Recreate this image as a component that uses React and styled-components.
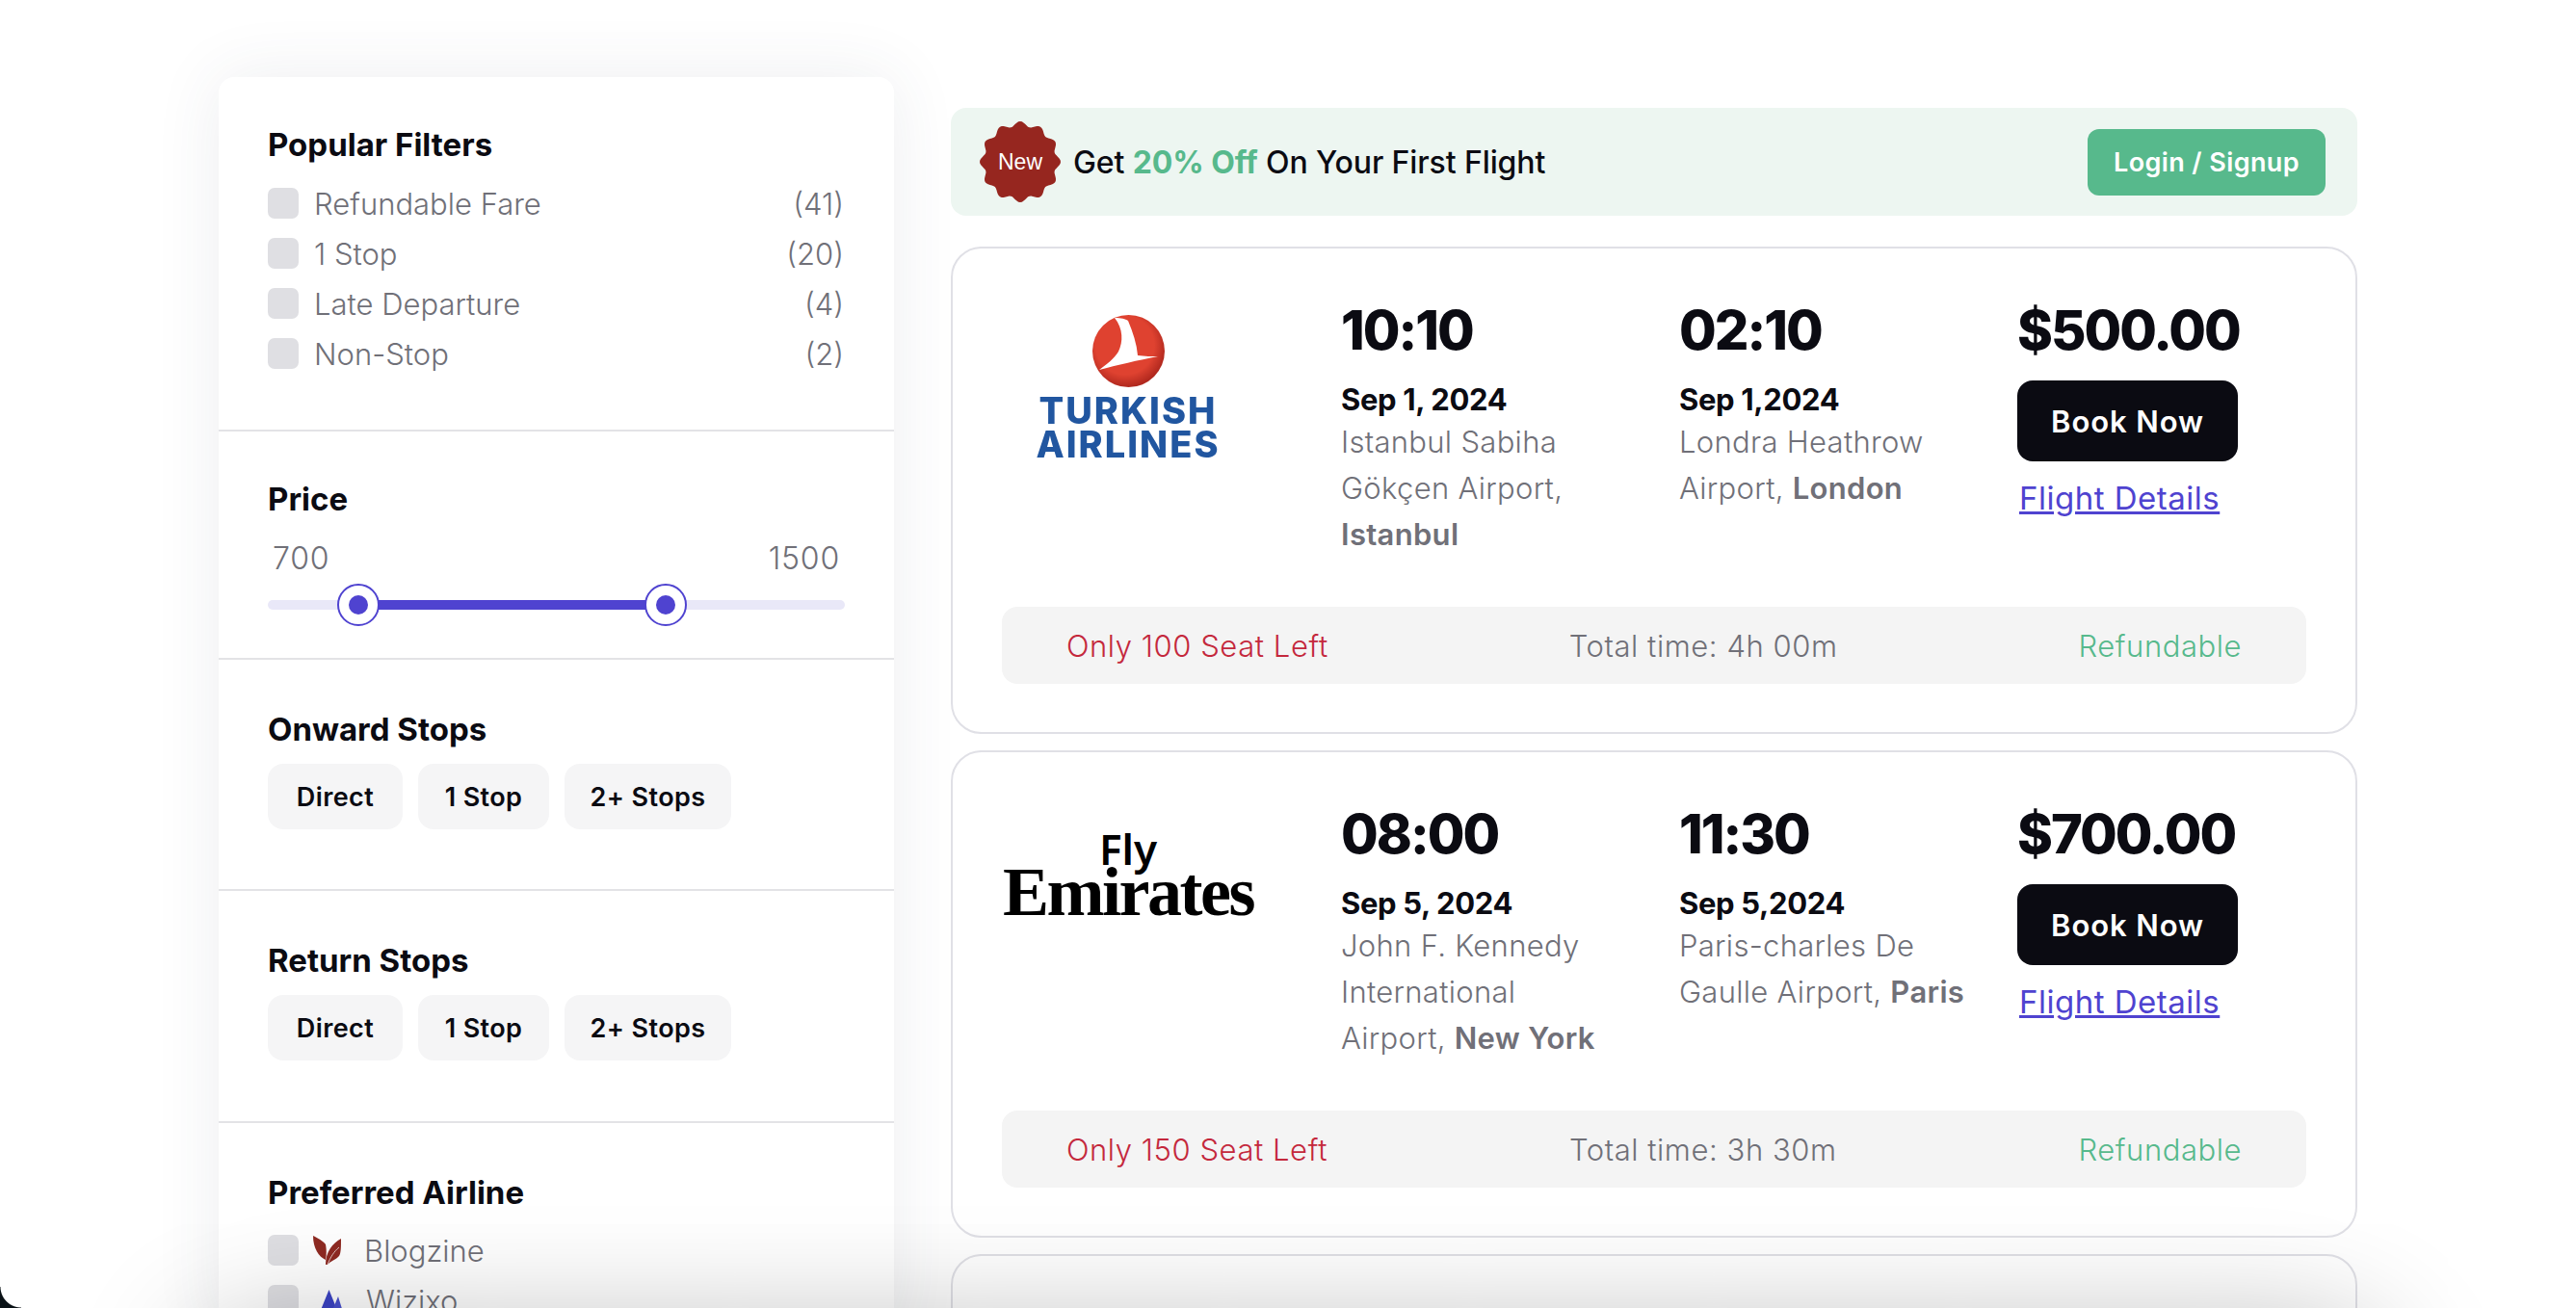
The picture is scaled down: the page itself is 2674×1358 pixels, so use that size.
import styled, { createGlobalStyle } from "styled-components";

const ink = "#0b0b12";
const gray = "#707078";
const green = "#57b98c";
const indigo = "#4f43d0";
const sans = `"Inter", "Liberation Sans", sans-serif`;

const GlobalStyle = createGlobalStyle`
  html, body {
    margin: 0;
    background: #fff;
    font-family: ${sans};
    color: ${ink};
  }
`;

const Page = styled.div`
  position: relative;
  display: flex;
  align-items: flex-start;
  gap: 59px;
  height: 1358px;
  padding: 80px 0 0 227px;
  box-sizing: border-box;
  overflow: hidden;
  background: #fff;
`;

const FooterShadow = styled.div`
  position: absolute;
  left: 230px;
  right: 230px;
  top: 1412px;
  height: 200px;
  border-radius: 40px;
  box-shadow: 0 0 130px 30px rgba(0, 0, 0, 0.3);
  pointer-events: none;
`;

const WindowCorner = styled.div`
  position: absolute;
  left: 0;
  bottom: 0;
  width: 22px;
  height: 22px;
  background: radial-gradient(circle at 100% 0, transparent 21px, #0a1216 22px);
  pointer-events: none;
`;

const Sidebar = styled.aside`
  flex: none;
  width: 701px;
  border-radius: 16px;
  background: #fff;
  box-shadow: 0 0 70px rgba(60, 70, 90, 0.09);
`;

const Section = styled.section`
  padding: ${(p) => p.$top}px 51px ${(p) => p.$bottom}px;
  border-bottom: ${(p) => (p.$last ? "none" : "2px solid #e3e3e6")};
`;

const Heading = styled.h3`
  margin: 0 0 ${(p) => p.$gap}px;
  font-size: 33px;
  line-height: 40px;
  font-weight: 700;
  letter-spacing: 0;
  color: ${ink};
`;

const CheckRow = styled.div`
  display: flex;
  align-items: center;
  height: 32px;
  margin-bottom: 20px;
  font-size: 31px;
  font-weight: 300;
  letter-spacing: 0;
  color: ${gray};
`;

const Check = styled.span`
  flex: none;
  width: 32px;
  height: 32px;
  margin-right: ${(p) => p.$gap || 16}px;
  border-radius: 7px;
  background: #dfdfe3;
`;

const Count = styled.span`
  margin-left: auto;
  padding-right: 1px;
`;

const AirlineIcon = styled.svg`
  flex: none;
  width: 30px;
  height: 30px;
  margin-right: ${(p) => p.$gap}px;
`;

const PriceLabels = styled.div`
  display: flex;
  justify-content: space-between;
  padding: 0 5px;
  font-size: 32px;
  line-height: 40px;
  font-weight: 300;
  letter-spacing: 0.8px;
  color: ${gray};
`;

const Slider = styled.div`
  position: relative;
  height: 44px;
  margin-top: 6px;
  &::before {
    content: "";
    position: absolute;
    left: 0;
    right: 0;
    top: 17px;
    height: 10px;
    border-radius: 5px;
    background: #e9e8f8;
  }
`;

const SliderFill = styled.div`
  position: absolute;
  left: 94px;
  width: 319px;
  top: 17px;
  height: 10px;
  background: ${indigo};
`;

const Thumb = styled.span`
  position: absolute;
  left: ${(p) => p.$at}px;
  top: 0;
  width: 44px;
  height: 44px;
  box-sizing: border-box;
  border: 2px solid ${indigo};
  border-radius: 50%;
  background: #fff;
  display: flex;
  align-items: center;
  justify-content: center;
  &::after {
    content: "";
    width: 20px;
    height: 20px;
    border-radius: 50%;
    background: ${indigo};
  }
`;

const Chips = styled.div`
  display: flex;
  gap: 16px;
`;

const Chip = styled.button`
  width: ${(p) => p.$width}px;
  height: 68px;
  padding: 0;
  border: none;
  border-radius: 16px;
  background: #f5f5f6;
  font-family: ${sans};
  font-size: 27px;
  font-weight: 600;
  letter-spacing: 0.4px;
  color: ${ink};
`;

const Main = styled.main`
  flex: none;
  width: 1460px;
  padding-top: 32px;
  display: flex;
  flex-direction: column;
`;

const Banner = styled.div`
  display: flex;
  align-items: center;
  height: 112px;
  margin-bottom: 32px;
  padding: 0 33px 0 30px;
  box-sizing: border-box;
  border-radius: 16px;
  background: #edf6f1;
`;

// 12 lobes round the badge
const badgeShape = Array.from({ length: 144 }, (_, i) => {
  const a = (i / 144) * Math.PI * 2;
  const r = 47 + 3 * Math.cos(12 * a);
  return `${(50 + r * Math.sin(a)).toFixed(1)}% ${(50 - r * Math.cos(a)).toFixed(1)}%`;
}).join(",");

const Badge = styled.div`
  flex: none;
  width: 84px;
  height: 84px;
  margin-right: 13px;
  display: flex;
  align-items: center;
  justify-content: center;
  background: #96261f;
  clip-path: polygon(${badgeShape});
  color: #fff;
  font-family: "Liberation Sans", sans-serif;
  font-size: 23px;
`;

const BannerText = styled.div`
  font-size: 32px;
  font-weight: 500;
  letter-spacing: -0.1px;
  color: ${ink};
`;

const Green = styled.strong`
  font-weight: 700;
  color: ${green};
`;

const LoginButton = styled.button`
  margin-left: auto;
  width: 247px;
  height: 69px;
  border: none;
  border-radius: 12px;
  background: ${green};
  color: #fff;
  font-family: ${sans};
  font-size: 27px;
  font-weight: 600;
  letter-spacing: 0.4px;
`;

const Card = styled.article`
  height: 506px;
  margin-bottom: 17px;
  padding: 53px 51px 0;
  box-sizing: border-box;
  border: 2px solid #e0e0e6;
  border-radius: 32px;
  background: #fff;
`;

const CardTop = styled.div`
  display: grid;
  grid-template-columns: 352px 351px 351px 1fr;
  height: 319px;
`;

const LogoBox = styled.div`
  width: 262px;
  display: flex;
  flex-direction: column;
  align-items: center;
  padding-top: ${(p) => p.$top}px;
`;

const TurkishMark = styled.svg`
  width: 75px;
  height: 75px;
  filter: blur(0.4px);
`;

const TurkishName = styled.div`
  margin-top: 7px;
  font-size: 38px;
  line-height: 35px;
  font-weight: 800;
  text-align: center;
  letter-spacing: 2px;
  color: #2156a0;
  filter: blur(0.4px);
`;

const FlyText = styled.div`
  font-family: "Noto Sans", sans-serif;
  font-size: 44px;
  line-height: 40px;
  font-weight: 600;
  color: #000;
`;

const EmiratesText = styled.div`
  font-family: "Liberation Serif", serif;
  font-size: 72px;
  line-height: 50px;
  font-weight: 700;
  letter-spacing: -2.5px;
  color: #000;
`;

const BigFigure = styled.div`
  font-size: 56px;
  line-height: 64px;
  font-weight: 800;
  letter-spacing: -2px;
  color: ${ink};
`;

const DateLine = styled.div`
  margin-top: 20px;
  font-size: 31px;
  line-height: 40px;
  font-weight: 700;
  letter-spacing: -0.35px;
  color: ${ink};
`;

const Place = styled.div`
  font-size: 31px;
  line-height: 48px;
  font-weight: 300;
  letter-spacing: 0.3px;
  color: ${gray};
  strong {
    font-weight: 600;
  }
`;

const PriceCol = styled.div`
  display: flex;
  flex-direction: column;
  align-items: flex-start;
`;

const BookButton = styled.button`
  width: 229px;
  height: 84px;
  margin-top: 20px;
  border: none;
  border-radius: 16px;
  background: ${ink};
  color: #fff;
  font-family: ${sans};
  font-size: 31px;
  font-weight: 600;
  letter-spacing: 0.9px;
`;

const DetailsLink = styled.a`
  margin: 18px 0 0 2px;
  font-size: 33px;
  line-height: 40px;
  letter-spacing: 0.5px;
  color: ${indigo};
  text-decoration: underline;
`;

const Strip = styled.div`
  display: flex;
  align-items: center;
  justify-content: space-between;
  height: 80px;
  padding: 0 67px;
  border-radius: 16px;
  background: #f4f4f4;
  font-size: 31px;
  font-weight: 300;
  letter-spacing: 0.55px;
  color: ${gray};
`;

const Seats = styled.span`
  color: #c4283c;
`;

const Refund = styled.span`
  color: ${green};
`;

const popular = [
  ["Refundable Fare", "(41)"],
  ["1 Stop", "(20)"],
  ["Late Departure", "(4)"],
  ["Non-Stop", "(2)"],
];

const stops = [
  ["Direct", 140],
  ["1 Stop", 136],
  ["2+ Stops", 173],
];

const BlogzineIcon = () => (
  <AirlineIcon $gap={23} viewBox="0 0 30 30">
    <path d="M0 0C4 2 10 5 13 9C14 14 14 20 13 25C6 22 0 13 0 0Z" fill="#8f2a22" />
    <path d="M29 3C29 12 29 18 27 21C24 25 18 26 15 30H13C13 17 20 8 29 3Z" fill="#8f2a22" />
    <path d="M15 30C18 22 22 16 27 12" fill="none" stroke="#fff" strokeWidth="0.7" />
  </AirlineIcon>
);

const WizixoIcon = () => (
  <AirlineIcon $gap={20} viewBox="0 0 30 30">
    <path d="M11.5 4L1 30H22Z" fill="#3c44c5" />
    <path d="M21 11L13 30H27Z" fill="#4a52cf" />
  </AirlineIcon>
);

const TurkishLogo = () => (
  <LogoBox $top={16}>
    <TurkishMark viewBox="0 0 75 75">
      <defs>
        <radialGradient id="ball" cx="45%" cy="42%" r="58%">
          <stop offset="70%" stopColor="#df4230" />
          <stop offset="100%" stopColor="#b0281e" />
        </radialGradient>
      </defs>
      <circle cx="37.5" cy="37.5" r="37.5" fill="url(#ball)" />
      <path
        d="M23 3C30 3 34 4 37 6C42 18 46 30 47 42C54 43 62 43 68 43C48 47 25 52 7 57C15 51 23 45 27 38C32 28 32 14 23 3Z"
        fill="#fff"
      />
    </TurkishMark>
    <TurkishName>
      TURKISH
      <br />
      AIRLINES
    </TurkishName>
  </LogoBox>
);

const EmiratesLogo = () => (
  <LogoBox $top={27}>
    <FlyText>Fly</FlyText>
    <EmiratesText>Emirates</EmiratesText>
  </LogoBox>
);

const flights = [
  {
    logo: <TurkishLogo />,
    depart: "10:10",
    departDate: "Sep 1, 2024",
    from: (
      <>
        Istanbul Sabiha
        <br />
        Gökçen Airport,
        <br />
        <strong>Istanbul</strong>
      </>
    ),
    arrive: "02:10",
    arriveDate: "Sep 1,2024",
    to: (
      <>
        Londra Heathrow
        <br />
        Airport, <strong>London</strong>
      </>
    ),
    price: "$500.00",
    seats: "Only 100 Seat Left",
    total: "Total time: 4h 00m",
  },
  {
    logo: <EmiratesLogo />,
    depart: "08:00",
    departDate: "Sep 5, 2024",
    from: (
      <>
        John F. Kennedy
        <br />
        International
        <br />
        Airport, <strong>New York</strong>
      </>
    ),
    arrive: "11:30",
    arriveDate: "Sep 5,2024",
    to: (
      <>
        Paris-charles De
        <br />
        Gaulle Airport, <strong>Paris</strong>
      </>
    ),
    price: "$700.00",
    seats: "Only 150 Seat Left",
    total: "Total time: 3h 30m",
  },
];

const FlightCard = ({ flight }) => (
  <Card>
    <CardTop>
      {flight.logo}
      <div>
        <BigFigure>{flight.depart}</BigFigure>
        <DateLine>{flight.departDate}</DateLine>
        <Place>{flight.from}</Place>
      </div>
      <div>
        <BigFigure>{flight.arrive}</BigFigure>
        <DateLine>{flight.arriveDate}</DateLine>
        <Place>{flight.to}</Place>
      </div>
      <PriceCol>
        <BigFigure>{flight.price}</BigFigure>
        <BookButton>Book Now</BookButton>
        <DetailsLink href="#">Flight Details</DetailsLink>
      </PriceCol>
    </CardTop>
    <Strip>
      <Seats>{flight.seats}</Seats>
      <span>{flight.total}</span>
      <Refund>Refundable</Refund>
    </Strip>
  </Card>
);

const StopChips = () => (
  <Chips>
    {stops.map(([label, width]) => (
      <Chip key={label} $width={width}>
        {label}
      </Chip>
    ))}
  </Chips>
);

const App = () => (
  <Page>
    <GlobalStyle />
    <Sidebar>
      <Section $top={50} $bottom={43}>
        <Heading $gap={25}>Popular Filters</Heading>
        {popular.map(([label, count]) => (
          <CheckRow key={label}>
            <Check />
            {label}
            <Count>{count}</Count>
          </CheckRow>
        ))}
      </Section>
      <Section $top={50} $bottom={33}>
        <Heading $gap={22}>Price</Heading>
        <PriceLabels>
          <span>700</span>
          <span>1500</span>
        </PriceLabels>
        <Slider>
          <SliderFill />
          <Thumb $at={72} />
          <Thumb $at={391} />
        </Slider>
      </Section>
      <Section $top={52} $bottom={62}>
        <Heading $gap={16}>Onward Stops</Heading>
        <StopChips />
      </Section>
      <Section $top={52} $bottom={63}>
        <Heading $gap={16}>Return Stops</Heading>
        <StopChips />
      </Section>
      <Section $top={52} $bottom={0} $last>
        <Heading $gap={24}>Preferred Airline</Heading>
        <CheckRow>
          <Check $gap={15} />
          <BlogzineIcon />
          Blogzine
        </CheckRow>
        <CheckRow>
          <Check $gap={20} />
          <WizixoIcon />
          Wizixo
        </CheckRow>
      </Section>
    </Sidebar>
    <Main>
      <Banner>
        <Badge>New</Badge>
        <BannerText>
          Get <Green>20% Off</Green> On Your First Flight
        </BannerText>
        <LoginButton>Login / Signup</LoginButton>
      </Banner>
      {flights.map((f) => (
        <FlightCard key={f.depart} flight={f} />
      ))}
      <Card />
    </Main>
    <FooterShadow />
    <WindowCorner />
  </Page>
);

export default App;
